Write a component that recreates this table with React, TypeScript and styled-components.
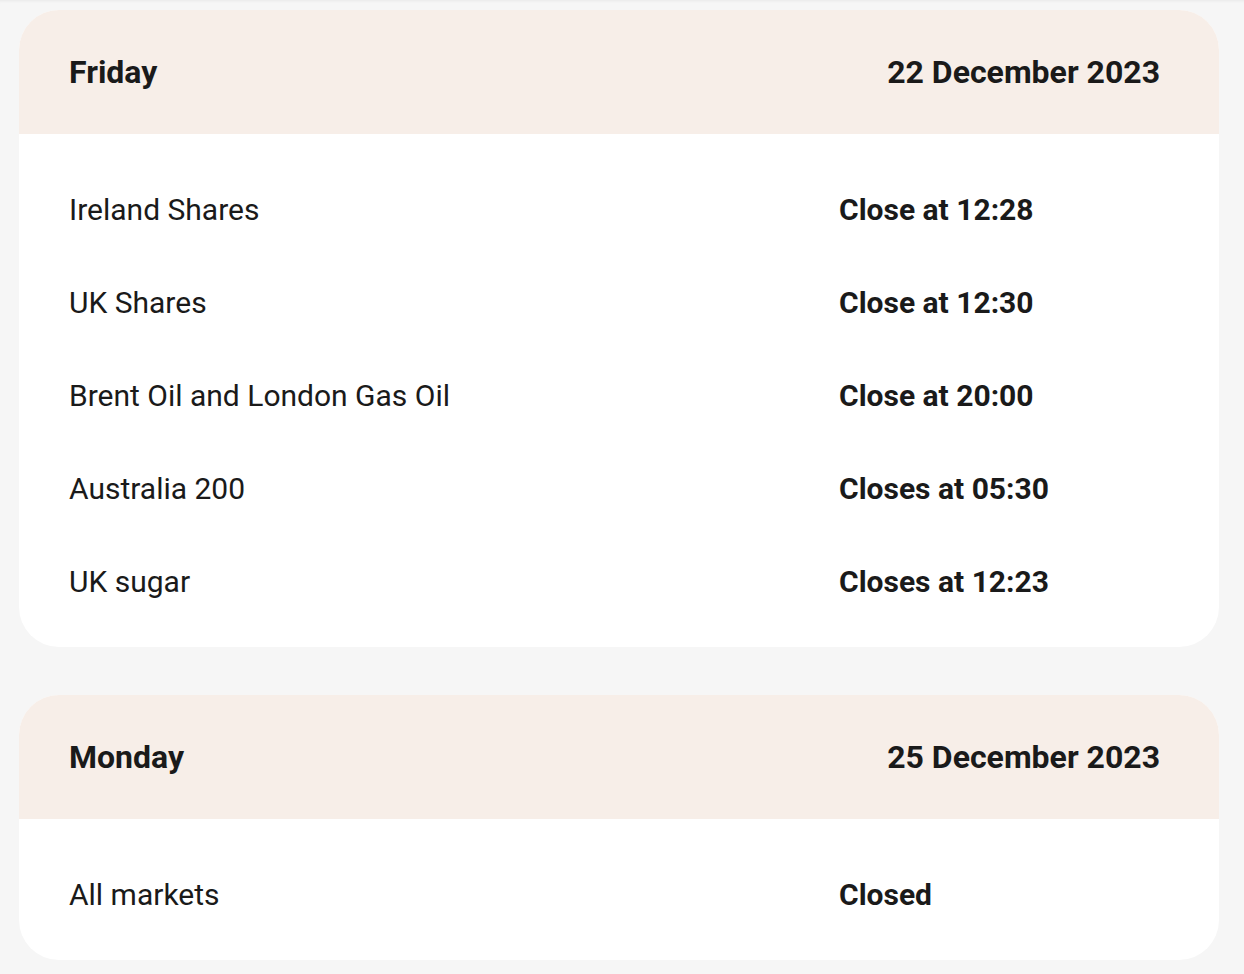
import React from "react";
import styled, { createGlobalStyle } from "styled-components";

const Global = createGlobalStyle`
  html, body { margin: 0; padding: 0; background: #f6f6f6; }
  body { font-family: Roboto, "Noto Sans", sans-serif; color: #1a1a1a; }
`;

const Page = styled.div`
  min-height: 974px;
  box-sizing: border-box;
  padding: 10px 25px 10px 19px;
  display: flex;
  flex-direction: column;
  gap: 48px;
  box-shadow: inset 0 3px 3px -2px rgba(0, 0, 0, 0.06);
`;

const Card = styled.section`
  width: 1200px;
  background: #ffffff;
  border-radius: 40px;
  overflow: hidden;
`;

const Header = styled.header`
  height: 124px;
  background: #f7eee8;
  display: flex;
  align-items: center;
  justify-content: space-between;
  padding: 0 59px 0 50px;
  font-size: 32px;
  font-weight: 700;
  color: #1a1a1a;
`;

const Body = styled.div`
  padding: 29px 0 19px 50px;
`;

const Row = styled.div`
  height: 93px;
  display: grid;
  grid-template-columns: 770px 1fr;
  align-items: center;
  font-size: 30px;
`;

const Market = styled.span`
  font-weight: 400;
`;

const Status = styled.span`
  font-weight: 700;
`;

type Day = { day: string; date: string; rows: [string, string][] };

const days: Day[] = [
  {
    day: "Friday",
    date: "22 December 2023",
    rows: [
      ["Ireland Shares", "Close at 12:28"],
      ["UK Shares", "Close at 12:30"],
      ["Brent Oil and London Gas Oil", "Close at 20:00"],
      ["Australia 200", "Closes at 05:30"],
      ["UK sugar", "Closes at 12:23"],
    ],
  },
  {
    day: "Monday",
    date: "25 December 2023",
    rows: [["All markets", "Closed"]],
  },
];

export default function App() {
  return (
    <>
      <Global />
      <Page>
        {days.map((d) => (
          <Card key={d.day}>
            <Header>
              <span>{d.day}</span>
              <span>{d.date}</span>
            </Header>
            <Body>
              {d.rows.map(([m, s]) => (
                <Row key={m}>
                  <Market>{m}</Market>
                  <Status>{s}</Status>
                </Row>
              ))}
            </Body>
          </Card>
        ))}
      </Page>
    </>
  );
}
